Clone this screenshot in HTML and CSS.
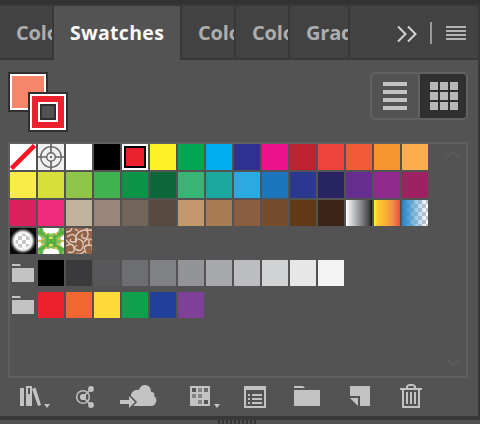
FILE: index.html
```html
<!DOCTYPE html>
<html lang="en">
<head>
<meta charset="utf-8">
<title>Swatches</title>
<link rel="stylesheet" href="styles.css">
</head>
<body>
<div class="panel">
  <nav class="tabs">
    <div class="tab first"><span>Color</span></div>
    <div class="tab active"><span>Swatches</span></div>
    <div class="tab"><span>Color</span></div>
    <div class="tab"><span>Color</span></div>
    <div class="tab grad"><span>Gradient</span></div>
    <div class="tab-tools">
      <svg width="128" height="52" viewBox="0 0 128 52"><path d="M48 20.500l7.500 7.500-7.500 7.500M58 20.500l7.500 7.500-7.500 7.500" fill="none" stroke="#d2d2d2" stroke-width="2"/><path d="M80 16h2v22h-2z" fill="#9b9b9b"/><path d="M96 20h20v2H96zM96 24h20v2H96zM96 28h20v2H96zM96 32h20v2H96z" fill="#b2b2b2"/></svg>
    </div>
  </nav>
  <div class="controls">
    <div class="paint">
      <div class="fill"></div>
      <div class="stroke"><div class="hole"></div></div>
    </div>
    <div class="views">
      <div class="view list"><i></i><i></i><i></i><i></i></div>
      <div class="view thumbs"><i></i><i></i><i></i><i></i><i></i><i></i><i></i><i></i><i></i></div>
    </div>
  </div>
  <div class="library">
    <div class="groups">
      <div class="swatches" id="main">
        <svg class="sw" viewBox="0 0 26 26"><path fill="#fff" d="M0 0h26v26H0z"/><path d="M1.500 24.500l23-23" stroke="#ff1022" stroke-width="4.500"/></svg>
        <svg class="sw" viewBox="0 0 26 26"><path fill="#f0f0f0" d="M0 0h26v26H0z"/><g fill="none" stroke="#666"><circle cx="13" cy="13" r="10.3" stroke-width="1.3"/><circle cx="13" cy="13" r="4.3" stroke-width="1.5"/><path stroke-width="1.7" d="M13 0v9M13 17v9M0 13h9M17 13h9"/></g><circle cx="13" cy="13" r="1.1" fill="#555"/></svg>
      </div>
      <div class="group" id="grays"><svg class="folder" viewBox="0 0 22 18"><path fill="#c3c3c3" d="M0 0h8l1 2H0zM0 4h22v14H0z"/></svg></div>
      <div class="group" id="brights"><svg class="folder" viewBox="0 0 22 18"><path fill="#c3c3c3" d="M0 0h8l1 2H0zM0 4h22v14H0z"/></svg></div>
    </div>
    <div class="scroll">
      <svg width="16" height="10" viewBox="0 0 16 10"><path d="M1 8l7-6 7 6" fill="none" stroke="#5b5b5b" stroke-width="2"/></svg>
      <svg width="16" height="10" viewBox="0 0 16 10"><path d="M1 2l7 6 7-6" fill="none" stroke="#5b5b5b" stroke-width="2"/></svg>
    </div>
  </div>
  <div class="toolbar">
    <svg class="books" width="30" height="28" viewBox="0 0 30 28"><path fill="#c3c3c3" fill-rule="evenodd" d="M0 6h4v18H0zM6 4h6v20H6zM8 6v6h2V6zM12 7l3.500-1.500L21 23l-3 1zM24 22h6l-3 4z"/></svg>
    <svg class="share" width="22" height="28" viewBox="0 0 22 28"><g fill="none" stroke="#bdbdbd" stroke-width="1.600"><circle cx="9" cy="15" r="6.300"/><path d="M9 15l8-8M9 15l8 8"/></g><g fill="#c3c3c3"><circle cx="9" cy="15" r="3.100"/><circle cx="17" cy="7" r="2.900"/><circle cx="17" cy="23" r="2.900"/></g></svg>
    <svg class="cloud" width="40" height="28" viewBox="0 0 40 28"><path fill="#c3c3c3" d="M17 24c-5 0-6-4-4-8-1-5 3-9 8-8 1-4 4-5 6-5 4 0 6 3 6 7 3 0 4 2 3 4 3 2 3 6 1 8-1 2-3 2-5 2z"/><path fill="#c3c3c3" stroke="#535353" stroke-width="3" paint-order="stroke" d="M2 18h9v-4l6 6-6 6v-4H2z"/></svg>
    <svg class="kinds" width="30" height="28" viewBox="0 0 30 28"><path fill="#c3c3c3" d="M0 4h20v20H0zM24 22h6l-3 4z"/><path fill="#555" d="M2 6h4v4H2zM14 18h4v4h-4z"/><path fill="#858585" d="M8 6h4v4H8zM2 12h4v4H2zM8 12h4v4H8zM8 18h4v4H8z"/><path fill="#6b6b6b" d="M14 6h4v4h-4z"/></svg>
    <svg class="options" width="22" height="28" viewBox="0 0 22 28"><path fill="#c3c3c3" fill-rule="evenodd" d="M0 4h22v22H0zM2 8v16h18V8z"/><path fill="#c3c3c3" d="M4 12h2v2H4zM8 12h10v2H8zM4 16h2v2H4zM8 16h10v2H8zM4 20h2v2H4zM8 20h10v2H8z"/></svg>
    <svg class="newgroup" width="26" height="28" viewBox="0 0 26 28"><path fill="#c3c3c3" d="M0 4h9l2 2H0zM0 8h26v16H0z"/></svg>
    <svg class="new" width="20" height="28" viewBox="0 0 20 28"><path fill="#c3c3c3" d="M0 4h20v20H10V14H0zM0 16h8v8z"/></svg>
    <svg class="trash" width="22" height="28" viewBox="0 0 22 28"><path d="M7 6V4.500q1-1.500 2.500-1.500h3q1.500 0 2.500 1.500V6M3 8v17h16V8" fill="none" stroke="#c3c3c3" stroke-width="2"/><path fill="#c3c3c3" d="M0 6h22v2H0zM6 10h2v12H6zM10 10h2v12h-2zM14 10h2v12h-2z"/></svg>
  </div>
</div>
<div class="footer"><div class="grip"></div></div>
<script src="swatches.js"></script>
</body>
</html>
```
FILE: styles.css
```css
* { box-sizing: border-box; }
body { margin: 0; width: 480px; height: 424px; overflow: hidden; background: #383838; font-family: "Open Sans", "Noto Sans", sans-serif; }
svg { display: block; flex: none; }
.panel { width: 478px; height: 416px; background: #535353; }
.tabs { display: flex; height: 60px; width: 480px; border-top: 4px solid #323232; background: #383838; padding-top: 2px; }
.tab { width: 54px; height: 52px; border-right: 2px solid #383838; background: #424242; color: #adadad; overflow: hidden; padding-left: 16px; font-size: 20px; line-height: 54px; font-weight: 700; letter-spacing: -.2px; white-space: nowrap; }
.tab.active { width: 128px; height: 54px; border-right: 2px solid #383838; background: #535353; color: #fafafa; font-size: 19.5px; letter-spacing: .3px; }
.tab.grad { width: 60px; }
.tab-tools { width: 128px; height: 52px; background: #424242; }
.controls { display: flex; justify-content: space-between; height: 82px; padding: 12px 10px 0 8px; }
.paint { display: grid; grid-template-columns: 20px 40px; grid-template-rows: 20px 40px; }
.fill { grid-area: 1 / 1; width: 40px; height: 40px; border: 2px solid #303030; background: #f7856c; box-shadow: inset 0 0 0 2px #fff; }
.stroke { grid-area: 2 / 2; z-index: 1; width: 40px; height: 40px; border: 2px solid #303030; background: #ec212e; box-shadow: inset 0 0 0 2px #fff; padding: 8px; }
.hole { width: 20px; height: 20px; border: 2px solid #fff; background: #535353; box-shadow: inset 0 0 0 2px #303030; }
.views { display: flex; width: 98px; height: 48px; border: 2px solid #626262; border-radius: 5px; overflow: hidden; }
.view { display: grid; align-content: start; gap: 2px; padding-top: 8px; }
.list { width: 48px; border-right: 2px solid #626262; gap: 4px; padding-left: 11px; }
.list i { width: 24px; height: 4px; background: #c3c3c3; }
.thumbs { width: 46px; background: #303030; grid-template-columns: 8px 8px 8px; padding-left: 10px; }
.thumbs i { height: 8px; background: #b9b9b9; }
.library { display: flex; justify-content: space-between; width: 460px; height: 236px; margin-left: 8px; border: 2px solid #5f5f5f; }
.swatches { display: grid; grid-template-columns: repeat(15, 26px); gap: 2px; }
.sw { width: 26px; height: 26px; }
.selected { border: 2px solid #fff; box-shadow: inset 0 0 0 2px #000; }
.group { display: flex; gap: 2px; margin-top: 6px; }
.folder { width: 22px; height: 18px; margin: 4px 2px 4px 2px; }
.scroll { display: flex; flex-direction: column; justify-content: space-between; padding: 6px 5px 9px 0; }
.toolbar { display: flex; height: 38px; padding: 4px 0 0 20px; }
.share { margin-left: 24px; }
.cloud { margin-left: 22px; }
.kinds { margin-left: 32px; }
.options { margin-left: 24px; }
.newgroup { margin-left: 28px; }
.new, .trash { margin-left: 30px; }
.footer { height: 8px; border-top: 4px solid #383838; background: #505050; }
.grip { width: 38px; height: 4px; margin-left: 218px; background: repeating-linear-gradient(90deg, #363636 0 2px, #505050 2px 4px); }
```
FILE: swatches.js
```js
const colors = {
  main: `#ffffff #000000 #ec212e #fff027 #00a652 #00aeef #2f3190 #ec118c #be2132 #ef433e #f05b35 #f69430 #fbae4b
    #f7ec48 #d8de3b #8fc549 #40b350 #0c9448 #0c673a #38b475 #1aa79d #2aaae1 #1c76bb #2a388f #282461 #662f8f #912a8d #9e2262
    #d9215d #ee2b7b #c3b39c #9b8579 #72665a #594a41 #c4986c #a87b53 #8b5e3f #754d2c #603917 #3c2416`,
  grays: "#000000 #3a3a3c #58585a #6d6e71 #808184 #939497 #a7a9ac #bcbdc0 #d1d2d4 #e7e7e8 #f3f3f4",
  brights: "#ed212e #f1672f #ffda39 #0ea04c #22409a #7f4098"
};

for (const [id, list] of Object.entries(colors)) {
  const row = document.getElementById(id);
  list.split(/\s+/).forEach((color, i) => {
    const cell = document.createElement("div");
    cell.className = id === "main" && i === 2 ? "sw selected" : "sw";
    cell.style.background = color;
    row.append(cell);
  });
}

const box = fill => `<path fill="${fill}" d="M0 0h26v26H0z"/>`;
const checks = `<pattern id="check" width="8" height="8" patternUnits="userSpaceOnUse"><path fill="#fff" d="M0 0h8v8H0z"/><path fill="#c4c6c8" d="M0 0h4v4H0zM4 4h4v4H4z"/></pattern>`;
const specials = [
  `<linearGradient id="bw"><stop stop-color="#fff"/><stop offset=".5" stop-color="#96989b"/><stop offset=".9" stop-color="#404042"/><stop offset="1" stop-color="#111"/></linearGradient>${box("url(#bw)")}`,
  `<linearGradient id="warm"><stop stop-color="#fff33b"/><stop offset=".14" stop-color="#fdca2f"/><stop offset=".4" stop-color="#fbb534"/><stop offset=".7" stop-color="#f3904b"/><stop offset="1" stop-color="#e94f3a"/></linearGradient>${box("url(#warm)")}`,
  `${checks}<linearGradient id="blue"><stop stop-color="#2484c6"/><stop offset=".3" stop-color="#3f94cf" stop-opacity=".85"/><stop offset="1" stop-color="#72b4df" stop-opacity="0"/></linearGradient>${box("url(#check)")}${box("url(#blue)")}`,
  `<radialGradient id="halo"><stop offset=".5" stop-color="#fff" stop-opacity="0"/><stop offset=".62" stop-color="#fff"/><stop offset=".72" stop-color="#ddd"/><stop offset=".88" stop-color="#444"/><stop offset="1" stop-color="#080808"/></radialGradient>${box("url(#check)")}${box("url(#halo)")}`,
  `${box("#83bf5b")}<g fill="#fff"><path d="M0 7l4 3-2 3 2 4-4 3zM26 7l-4 3 2 3-2 4 4 3z"/></g><g fill="none" stroke="#55ae41" stroke-width="2.500"><path d="M0 4l9 4 4 5 4-5 9-4M0 22l9-4 4-5 4 5 9 4M3 0v5M23 0v5M3 26v-5M23 26v-5M9 8v10M17 8v10"/></g><g fill="#e9bd4b"><path d="M0 12h3v2H0zM23 12h3v2h-3zM7 5h2v2H7zM17 5h2v2h-2zM7 19h2v2H7zM17 19h2v2h-2zM4 10h2v2H4zM20 10h2v2h-2zM4 15h2v2H4zM20 15h2v2h-2z"/></g><path fill="#d5df55" d="M11 9h4v2h-4zM11 16h4v2h-4z"/><path fill="#fff" d="M5 0h16q0 6-6 5-2 2-4 0-6 1-6-5M5 26h16q0-6-6-5-2-2-4 0-6-1-6 5"/>`,
  `${box("#946244")}<g fill="none" stroke="#ddc9bc" stroke-width="1.400"><path d="M0 4q5 0 6-4M1 9q6-5 9 0t-4 5q-3-1-1-3M10 15q-2-9 5-12t7 3-5 4q-3-2 0-4M12 11q6 1 5 7t-6 4 0-5M0 18q7-4 8 2t-6 4M4 16l-4-4M18 14q4-5 8-2M20 25q-4-7 2-8t4 5M10 26q6 1 8-3M20 0q2 3 6 2M9 1l3 2M23 12v6"/></g>`
];
const main = document.getElementById("main");
for (const art of specials) {
  main.insertAdjacentHTML("beforeend", `<svg class="sw" viewBox="0 0 26 26">${art}</svg>`);
}
```
